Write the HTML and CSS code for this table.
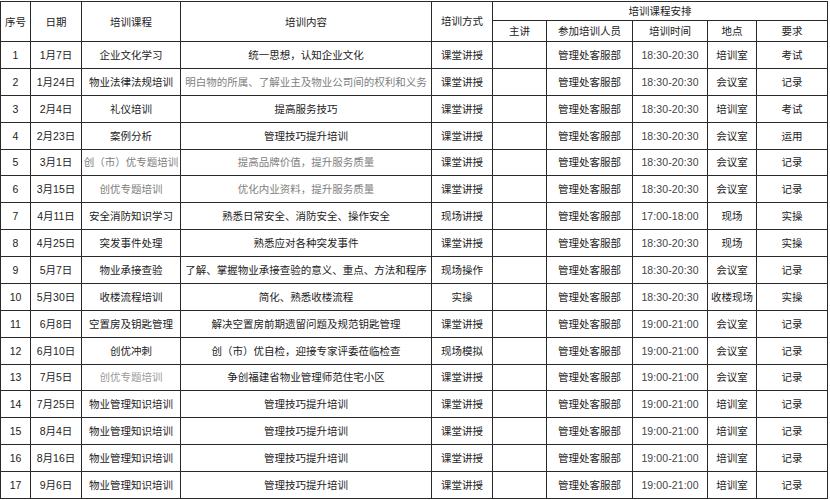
FILE: index.html
```html
<!DOCTYPE html>
<html lang="zh-CN">
<head>
<meta charset="utf-8">
<title>培训课程安排</title>
<link rel="stylesheet" href="styles.css">
</head>
<body>
<table class="plan">
  <colgroup>
    <col class="c-no"><col class="c-date"><col class="c-course"><col class="c-content"><col class="c-mode">
    <col class="c-lect"><col class="c-who"><col class="c-time"><col class="c-place"><col class="c-req">
  </colgroup>
  <thead>
    <tr class="h1">
      <th rowspan="2">序号</th>
      <th rowspan="2">日期</th>
      <th rowspan="2">培训课程</th>
      <th rowspan="2">培训内容</th>
      <th rowspan="2" class="mode-h">培训方式</th>
      <th colspan="5">培训课程安排</th>
    </tr>
    <tr class="h2">
      <th>主讲</th>
      <th>参加培训人员</th>
      <th>培训时间</th>
      <th>地点</th>
      <th>要求</th>
    </tr>
  </thead>
  <tbody>
    <tr><td>1</td><td>1月7日</td><td>企业文化学习</td><td>统一思想，认知企业文化</td><td>课堂讲授</td><td></td><td>管理处客服部</td><td class="time">18:30-20:30</td><td>培训室</td><td>考试</td></tr>
    <tr><td>2</td><td>1月24日</td><td>物业法律法规培训</td><td class="faint">明白物的所属、了解业主及物业公司间的权利和义务</td><td>课堂讲授</td><td></td><td>管理处客服部</td><td class="time">18:30-20:30</td><td>会议室</td><td>记录</td></tr>
    <tr><td>3</td><td>2月4日</td><td>礼仪培训</td><td>提高服务技巧</td><td>课堂讲授</td><td></td><td>管理处客服部</td><td class="time">18:30-20:30</td><td>培训室</td><td>考试</td></tr>
    <tr><td>4</td><td>2月23日</td><td>案例分析</td><td>管理技巧提升培训</td><td>课堂讲授</td><td></td><td>管理处客服部</td><td class="time">18:30-20:30</td><td>会议室</td><td>运用</td></tr>
    <tr><td>5</td><td>3月1日</td><td class="faint">创（市）优专题培训</td><td class="faint">提高品牌价值，提升服务质量</td><td>课堂讲授</td><td></td><td>管理处客服部</td><td class="time">18:30-20:30</td><td>会议室</td><td>记录</td></tr>
    <tr><td>6</td><td>3月15日</td><td class="faint">创优专题培训</td><td class="faint">优化内业资料，提升服务质量</td><td>课堂讲授</td><td></td><td>管理处客服部</td><td class="time">18:30-20:30</td><td>会议室</td><td>记录</td></tr>
    <tr><td>7</td><td>4月11日</td><td>安全消防知识学习</td><td>熟悉日常安全、消防安全、操作安全</td><td>现场讲授</td><td></td><td>管理处客服部</td><td class="time">17:00-18:00</td><td>现场</td><td>实操</td></tr>
    <tr><td>8</td><td>4月25日</td><td>突发事件处理</td><td>熟悉应对各种突发事件</td><td>课堂讲授</td><td></td><td>管理处客服部</td><td class="time">18:30-20:30</td><td>现场</td><td>实操</td></tr>
    <tr><td>9</td><td>5月7日</td><td>物业承接查验</td><td>了解、掌握物业承接查验的意义、重点、方法和程序</td><td>现场操作</td><td></td><td>管理处客服部</td><td class="time">18:30-20:30</td><td>会议室</td><td>记录</td></tr>
    <tr><td>10</td><td>5月30日</td><td>收楼流程培训</td><td>简化、熟悉收楼流程</td><td>实操</td><td></td><td>管理处客服部</td><td class="time">18:30-20:30</td><td>收楼现场</td><td>实操</td></tr>
    <tr><td>11</td><td>6月8日</td><td>空置房及钥匙管理</td><td>解决空置房前期遗留问题及规范钥匙管理</td><td>课堂讲授</td><td></td><td>管理处客服部</td><td class="time">19:00-21:00</td><td>会议室</td><td>记录</td></tr>
    <tr><td>12</td><td>6月10日</td><td>创优冲刺</td><td>创（市）优自检，迎接专家评委莅临检查</td><td>现场模拟</td><td></td><td>管理处客服部</td><td class="time">19:00-21:00</td><td>会议室</td><td>记录</td></tr>
    <tr><td>13</td><td>7月5日</td><td class="faint light">创优专题培训</td><td>争创福建省物业管理师范住宅小区</td><td>课堂讲授</td><td></td><td>管理处客服部</td><td class="time">19:00-21:00</td><td>会议室</td><td>记录</td></tr>
    <tr><td>14</td><td>7月25日</td><td>物业管理知识培训</td><td>管理技巧提升培训</td><td>课堂讲授</td><td></td><td>管理处客服部</td><td class="time">19:00-21:00</td><td>培训室</td><td>记录</td></tr>
    <tr><td>15</td><td>8月4日</td><td>物业管理知识培训</td><td>管理技巧提升培训</td><td>课堂讲授</td><td></td><td>管理处客服部</td><td class="time">19:00-21:00</td><td>培训室</td><td>记录</td></tr>
    <tr><td>16</td><td>8月16日</td><td>物业管理知识培训</td><td>管理技巧提升培训</td><td>课堂讲授</td><td></td><td>管理处客服部</td><td class="time">19:00-21:00</td><td>培训室</td><td>记录</td></tr>
    <tr><td>17</td><td>9月6日</td><td>物业管理知识培训</td><td>管理技巧提升培训</td><td>课堂讲授</td><td></td><td>管理处客服部</td><td class="time">19:00-21:00</td><td>培训室</td><td>记录</td></tr>
  </tbody>
</table>
</body>
</html>
```

FILE: styles.css
```css
html, body {
  margin: 0;
  padding: 0;
  background: #ffffff;
}

body {
  padding: 1px 0 0 0;
  font-family: "Liberation Sans", "Noto Sans CJK SC", sans-serif;
  font-size: 10.5px;
  color: #222222;
}

.plan {
  border-collapse: collapse;
  table-layout: fixed;
  width: 828px;
}

.c-no { width: 30px; }
.c-date { width: 51px; }
.c-course { width: 99px; }
.c-content { width: 251px; }
.c-mode { width: 61px; }
.c-lect { width: 54px; }
.c-who { width: 86px; }
.c-time { width: 75px; }
.c-place { width: 49px; }
.c-req { width: 71px; }

.plan th,
.plan td {
  border: 1px solid #2a2a2a;
  padding: 0;
  text-align: center;
  vertical-align: middle;
  white-space: nowrap;
  overflow: hidden;
  font-weight: normal;
  line-height: 12px;
}

.plan .h1 th {
  height: 18px;
}

.plan .h2 th {
  height: 20px;
}

.plan .mode-h {
  padding-bottom: 2px;
}

.plan tbody tr {
  height: 26.88px;
}

.plan .time {
  color: #444444;
  letter-spacing: 0.1px;
}

.plan .faint {
  color: #808080;
}

.plan .light {
  color: #9a9a9a;
}
```
